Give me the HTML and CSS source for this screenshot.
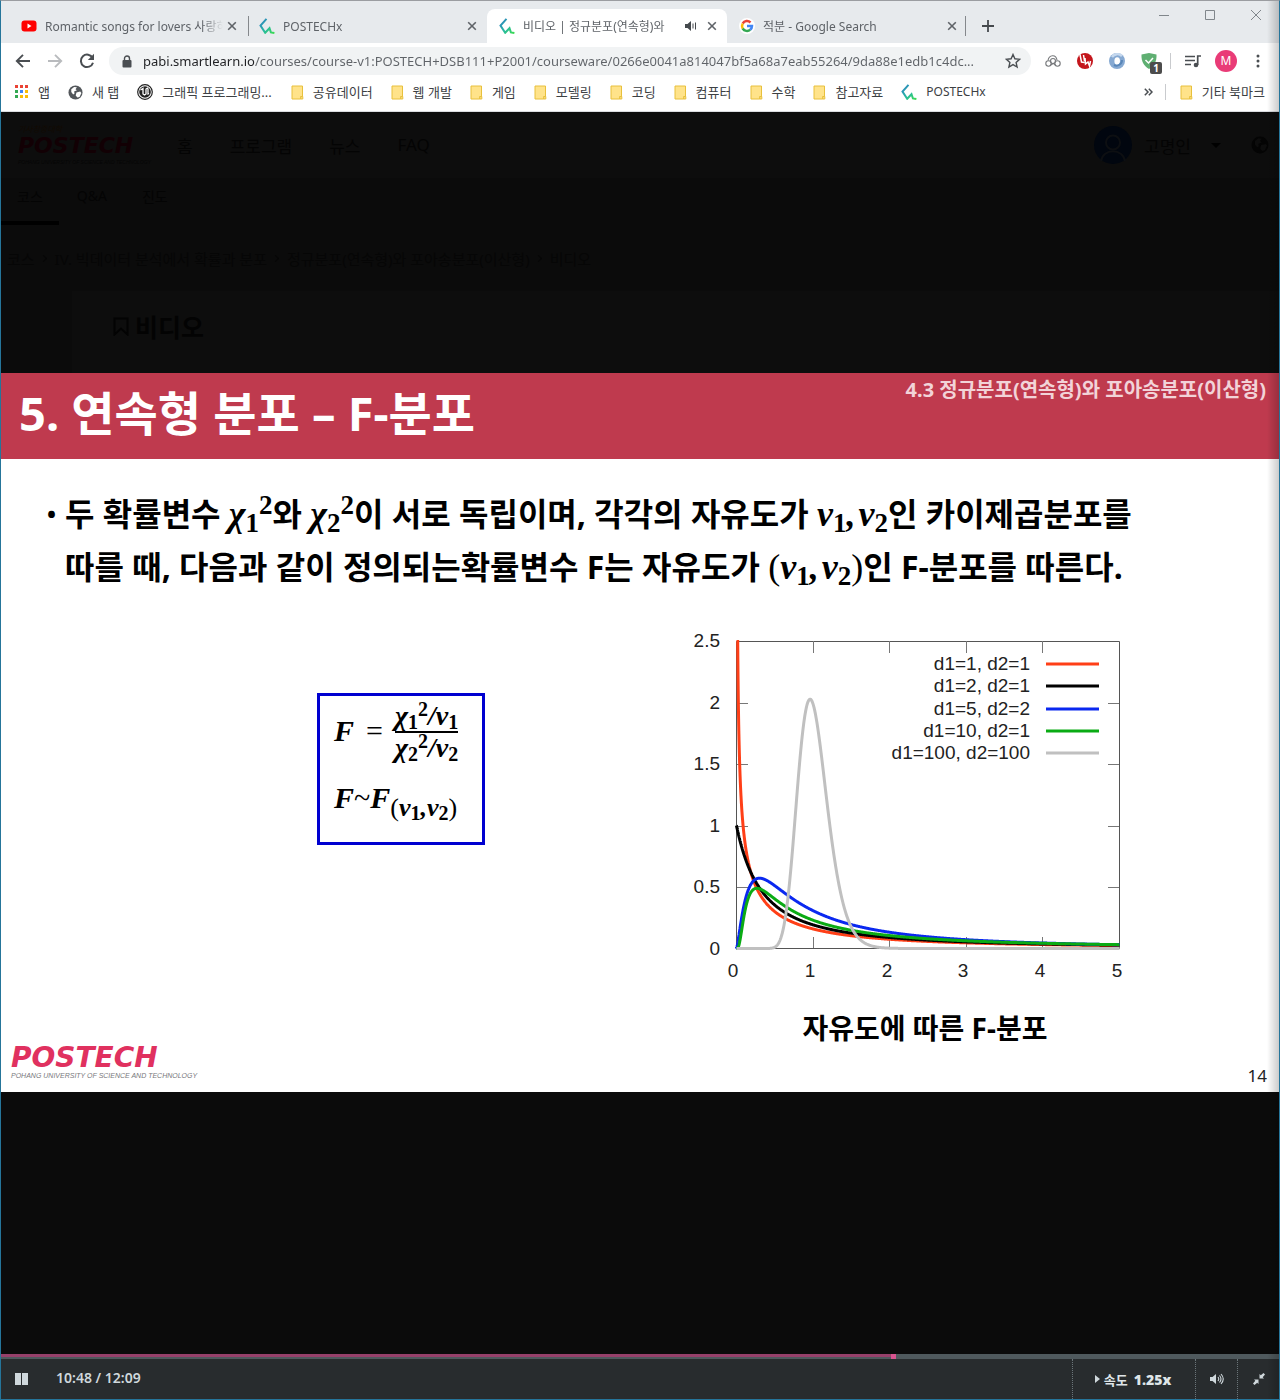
FILE: index.html
```html
<!DOCTYPE html>
<html lang="ko">
<head>
<meta charset="utf-8">
<meta name="viewport" content="width=device-width, initial-scale=1">
<title>비디오 | 정규분포(연속형)와 포아송분포(이산형)</title>
<link rel="stylesheet" href="styles.css">
</head>
<body>
<svg class="defs" width="0" height="0" aria-hidden="true">
  <defs>
    <linearGradient id="mark" x1="0" y1="0" x2="1" y2="1"><stop offset="0" stop-color="#2d7fc4"/><stop offset=".55" stop-color="#27b9a0"/><stop offset="1" stop-color="#3bdc4e"/></linearGradient>
    <symbol id="i-close" viewBox="0 0 10 10"><path d="M1.2 1.2l7.6 7.6M8.8 1.2L1.2 8.8" stroke="#5f6368" stroke-width="1.6" fill="none"/></symbol>
    <symbol id="i-smart" viewBox="0 0 16 16"><path d="M7.500 .8L1.500 7.500l4.700 7.300 4.300-4.600 1.400 4.200 3.500.6" stroke="url(#mark)" stroke-width="2" fill="none"/></symbol>
    <symbol id="i-folder" viewBox="0 0 13 15"><path d="M1 1h10.500v10.500H9.800V14H1z" fill="#ffe38a" stroke="#e8c03c"/><path d="M9.800 14V11.500h2V14z" fill="#ffe38a" stroke="#e8c03c"/></symbol>
    <symbol id="i-globe" viewBox="0 0 16 16"><circle cx="8" cy="8" r="7.500" fill="currentColor"/><path d="M3.500 4.500l3-2.500 3 .5-1.500 2 1.500 1-3 1.500.5 2-1.500 1-2-2.500zM9 8l4-1 1.300 1.500-2 4.200-2.300.6-1.800-2z" class="land"/></symbol>
  </defs>
</svg>

<div class="window">
  <header class="browser">
    <div class="tabstrip">
      <div class="tab">
        <svg class="fav" viewBox="0 0 16 16"><rect x=".5" y="2.500" width="15" height="11" rx="3" fill="#f00"/><path d="M6.500 5.500v5l4-2.500z" fill="#fff"/></svg>
        <span class="tab-title">Romantic songs for lovers 사랑하</span>
        <button class="icon-btn" aria-label="탭 닫기"><svg width="10" height="10"><use href="#i-close"/></svg></button>
      </div>
      <div class="tab tab-line">
        <svg class="fav"><use href="#i-smart"/></svg>
        <span class="tab-title">POSTECHx</span>
        <button class="icon-btn" aria-label="탭 닫기"><svg width="10" height="10"><use href="#i-close"/></svg></button>
      </div>
      <div class="tab tab-active">
        <svg class="fav"><use href="#i-smart"/></svg>
        <span class="tab-title">비디오 | 정규분포(연속형)와</span>
        <svg class="sound" width="12" height="12" viewBox="0 0 12 12"><path d="M0 4h2.500L6 1v10L2.500 8H0z" fill="#45494d"/><path d="M8 3.500v5M10.500 2.500v7" stroke="#45494d"/></svg>
        <button class="icon-btn" aria-label="탭 닫기"><svg width="10" height="10"><use href="#i-close"/></svg></button>
      </div>
      <div class="tab">
        <svg class="fav" viewBox="0 0 16 16" fill="none" stroke-width="2.500"><circle cx="8" cy="8" r="8" fill="#fff"/><path d="M11.500 4.500A5 5 0 0 0 3.700 5.500" stroke="#ea4335"/><path d="M3.700 5.500a5 5 0 0 0 0 5" stroke="#fbbc05"/><path d="M3.700 10.500a5 5 0 0 0 7.500 1.300" stroke="#34a853"/><path d="M11.200 11.800A5 5 0 0 0 13 8H8" stroke="#4285f4"/></svg>
        <span class="tab-title">적분 - Google Search</span>
        <button class="icon-btn" aria-label="탭 닫기"><svg width="10" height="10"><use href="#i-close"/></svg></button>
      </div>
      <button class="icon-btn new-tab" aria-label="새 탭"><svg width="12" height="12" viewBox="0 0 12 12"><path d="M6 0v12M0 6h12" stroke="#45494d" stroke-width="1.800"/></svg></button>
      <div class="window-buttons">
        <button class="icon-btn" aria-label="최소화"><svg width="12" height="12" viewBox="0 0 12 12"><path d="M1 6.500h10" stroke="#80868b"/></svg></button>
        <button class="icon-btn" aria-label="최대화"><svg width="12" height="12" viewBox="0 0 12 12"><path d="M1.500 1.500h9v9h-9z" stroke="#80868b" fill="none"/></svg></button>
        <button class="icon-btn" aria-label="닫기"><svg width="12" height="12" viewBox="0 0 12 12"><path d="M1 1l10 10M11 1L1 11" stroke="#80868b"/></svg></button>
      </div>
    </div>

    <div class="toolbar">
      <button class="icon-btn" aria-label="뒤로"><svg width="16" height="16" viewBox="0 0 16 16" fill="none" stroke="#4a4e52" stroke-width="1.900"><path d="M15 8H2M8 1.800L1.800 8 8 14.200"/></svg></button>
      <button class="icon-btn" aria-label="앞으로"><svg width="16" height="16" viewBox="0 0 16 16" fill="none" stroke="#b9bbbe" stroke-width="1.900"><path d="M1 8h13M8 1.800L14.200 8 8 14.200"/></svg></button>
      <button class="icon-btn" aria-label="새로고침"><svg width="16" height="16" viewBox="0 0 16 16"><path d="M13.600 5A6.200 6.200 0 1 0 14 9.700" fill="none" stroke="#4a4e52" stroke-width="2"/><path d="M15 .8v6.200H8.800z" fill="#4a4e52"/></svg></button>
      <div class="omnibox">
        <svg width="10" height="13" viewBox="0 0 10 13"><rect x=".5" y="5" width="9" height="7.500" rx="1" fill="#4a4e52"/><path d="M2.500 5V3.500a2.500 2.500 0 0 1 5 0V5" fill="none" stroke="#4a4e52" stroke-width="1.400"/></svg>
        <input class="url" type="text" aria-label="주소" value="pabi.smartlearn.io/courses/course-v1:POSTECH+DSB111+P2001/courseware/0266e0041a814047bf5a68a7eab55264/9da88e1edb1c4dc...">
        <button class="icon-btn" aria-label="북마크"><svg width="16" height="16" viewBox="0 0 16 16"><path d="M8 1.500l1.900 4.300 4.700.5-3.500 3.100 1 4.600L8 11.600 3.900 14l1-4.600L1.400 6.300l4.700-.5z" fill="none" stroke="#4a4e52" stroke-width="1.400"/></svg></button>
      </div>
      <div class="extensions">
        <svg width="16" height="16" viewBox="0 0 16 16" fill="none" stroke="#77797c" stroke-width="1.100"><circle cx="3.500" cy="10.500" r="2.700"/><circle cx="12.500" cy="10.500" r="2.700"/><circle cx="8" cy="8" r="2.500"/><path d="M3 7.500C4 1.500 11 1 12 7M5.500 12l3-1.500 2 1.500"/></svg>
        <svg width="16" height="16" viewBox="0 0 16 16"><circle cx="8" cy="8" r="8" fill="#c4161c"/><path d="M3 1.500l1.500 7.500 3 .5M6.500 2l1 6M8 5l.5 6 2.500-2 1.500 4L13.500 8" stroke="#fff" stroke-width="1.500" fill="none"/></svg>
        <svg width="16" height="16" viewBox="0 0 16 16"><circle cx="8" cy="8" r="8" fill="#86a9d2"/><path d="M3 4a6.500 6.500 0 0 1 10-1" stroke="#c5d8ee" stroke-width="2.500" fill="none"/><ellipse cx="8.200" cy="8" rx="2.800" ry="3.800" fill="#fff"/><path d="M5 12a5.500 5.500 0 0 0 8-5" stroke="#5986b8" stroke-width="2" fill="none"/></svg>
        <span class="guard"><svg width="16" height="16" viewBox="0 0 16 16"><path d="M8 0l7.500 1.500c.3 7-2 11-7.500 14.500C2.500 12.500.2 8.500.5 1.500z" fill="#5faf72"/><path d="M4.500 7l3 3L12 5" fill="none" stroke="#fff" stroke-width="1.500"/></svg><b class="badge">1</b></span>
        <span class="divider"></span>
        <svg width="16" height="14" viewBox="0 0 16 14"><path d="M0 2.500h10M0 6.500h10M0 10.500h6" stroke="#4a4e52" stroke-width="1.700"/><path d="M12.700 11V2H16" stroke="#4a4e52" stroke-width="1.700" fill="none"/><circle cx="11" cy="11" r="2.300" fill="#4a4e52"/></svg>
        <button class="avatar" aria-label="프로필">M</button>
        <button class="icon-btn" aria-label="메뉴"><svg width="14" height="14" viewBox="0 0 14 14" fill="#4a4e52"><circle cx="7" cy="2" r="1.500"/><circle cx="7" cy="7" r="1.500"/><circle cx="7" cy="12" r="1.500"/></svg></button>
      </div>
    </div>

    <nav class="bookmarks" aria-label="북마크">
      <a href="#"><svg width="14" height="14" viewBox="0 0 14 14"><path d="M0 0h3v3H0zM5 0h3v3H5zM10 0h3v3h-3z" fill="#ea4335"/><path d="M0 5h3v3H0zM0 10h3v3H0z" fill="#34a853"/><path d="M5 5h3v3H5z" fill="#4285f4"/><path d="M10 5h3v3h-3zM5 10h3v3H5zM10 10h3v3h-3z" fill="#fbbc05"/></svg>앱</a>
      <a href="#"><svg class="bm-globe" width="15" height="15"><use href="#i-globe"/></svg>새 탭</a>
      <a href="#"><svg width="16" height="16" viewBox="0 0 16 16"><circle cx="8" cy="8" r="7.300" fill="#fff" stroke="#222" stroke-width="1.200"/><circle cx="8" cy="8" r="5.800" fill="#222"/><path d="M3.500 6L6 4.500v5.500l1.500 1 1.500-1V5l2-1.200M11 4.500V10l1-.5" stroke="#fff" stroke-width="1.300" fill="none"/></svg>그래픽 프로그래밍...</a>
      <a href="#" class="first-folder"><svg width="13" height="15"><use href="#i-folder"/></svg>공유데이터</a>
      <a href="#"><svg width="13" height="15"><use href="#i-folder"/></svg>웹 개발</a>
      <a href="#"><svg width="13" height="15"><use href="#i-folder"/></svg>게임</a>
      <a href="#"><svg width="13" height="15"><use href="#i-folder"/></svg>모델링</a>
      <a href="#"><svg width="13" height="15"><use href="#i-folder"/></svg>코딩</a>
      <a href="#"><svg width="13" height="15"><use href="#i-folder"/></svg>컴퓨터</a>
      <a href="#"><svg width="13" height="15"><use href="#i-folder"/></svg>수학</a>
      <a href="#"><svg width="13" height="15"><use href="#i-folder"/></svg>참고자료</a>
      <a href="#" class="latin"><svg width="16" height="16"><use href="#i-smart"/></svg>POSTECHx</a>
      <button class="icon-btn more" aria-label="북마크 더보기"><svg width="9" height="8" viewBox="0 0 9 8"><path d="M.8.8L4 4 .8 7.200M4.800.8L8 4 4.800 7.200" fill="none" stroke="#4a4e52" stroke-width="1.500"/></svg></button>
      <span class="divider"></span>
      <a href="#"><svg width="13" height="15"><use href="#i-folder"/></svg>기타 북마크</a>
    </nav>
  </header>

  <section class="course">
    <div class="site-header">
      <div class="logo logo-dim"><small class="logo-ko">기사창중대학</small><strong>POSTECH</strong><small>POHANG UNIVERSITY OF SCIENCE AND TECHNOLOGY</small></div>
      <nav class="site-nav"><a href="#">홈</a><a href="#">프로그램</a><a href="#">뉴스</a><a href="#">FAQ</a></nav>
      <div class="account">
        <svg width="38" height="38" viewBox="0 0 38 38"><circle cx="19" cy="19" r="19" fill="#01060f"/><circle cx="19" cy="16.500" r="7" fill="none" stroke="#0d0f12" stroke-width="2"/><path d="M7 35c2-13 22-13 24 0" fill="none" stroke="#0d0f12" stroke-width="2"/></svg>
        <span>고명인</span>
        <svg class="caret" width="10" height="5" viewBox="0 0 10 5"><path d="M0 0h10L5 5z" fill="#000"/></svg>
        <svg class="world" width="18" height="18"><use href="#i-globe"/></svg>
      </div>
    </div>
    <nav class="course-tabs"><a href="#" class="current">코스</a><a href="#">Q&amp;A</a><a href="#">진도</a></nav>
    <nav class="crumbs"><a href="#">코스</a><i></i><a href="#">IV. 빅데이터 분석에서 확률과 분포</a><i></i><a href="#">정규분포(연속형)와 포아송분포(이산형)</a><i></i><span>비디오</span></nav>
    <div class="unit"><svg width="16" height="19" viewBox="0 0 16 19"><path d="M1.500 1.500h13v16L8 11.500l-6.500 6z" fill="none" stroke="#030303" stroke-width="2"/></svg><h2>비디오</h2></div>
  </section>

  <main class="slide">
    <div class="slide-head">
      <h1>5. 연속형 분포 – F-분포</h1>
      <p>4.3 정규분포(연속형)와 포아송분포(이산형)</p>
    </div>
    <ul class="points">
      <li>두 확률변수 <span class="math">χ<sub>1</sub><sup>2</sup></span>와 <span class="math">χ<sub>2</sub><sup>2</sup></span>이 서로 독립이며, 각각의 자유도가 <span class="math">v<sub>1</sub>,&#8202;v<sub>2</sub></span>인 카이제곱분포를<br>따를 때, 다음과 같이 정의되는확률변수 F는 자유도가 <span class="math"><span class="paren">(</span>v<sub>1</sub>,&#8202;v<sub>2</sub><span class="paren">)</span></span>인 F-분포를 따른다.</li>
    </ul>
    <div class="exhibit">
      <div class="formula math">
        <div class="equation">F <span class="rel">=</span>
          <span class="fraction"><span>χ<sub>1</sub><sup>2</sup>/v<sub>1</sub></span><span>χ<sub>2</sub><sup>2</sup>/v<sub>2</sub></span></span>
        </div>
        <div class="law">F<span class="rel">~</span>F<sub><span class="paren">(</span>v<sub>1</sub>,v<sub>2</sub><span class="paren">)</span></sub></div>
      </div>
      <figure>
        <svg class="chart" viewBox="0 0 440 360" role="img" aria-label="자유도에 따른 F-분포">
          <path class="axis" d="M46.500 11.500h383v307h-383z"/>
          <path class="tick" d="M123.500 11v12M199.500 11v12M276.500 11v12M352.500 11v12M123.500 318v-11M199.500 318v-11M276.500 318v-11M352.500 318v-11M47 73.500h11M47 134.500h11M47 196.500h11M47 257.500h11M429 73.500h-11M429 134.500h-11M429 196.500h-11M429 257.500h-11"/>
          <g id="curves"></g>
          <g class="end"><text x="30" y="17">2.5</text><text x="30" y="79">2</text><text x="30" y="140">1.5</text><text x="30" y="202">1</text><text x="30" y="263">0.5</text><text x="30" y="325">0</text></g>
          <g class="mid"><text x="43" y="347">0</text><text x="120" y="347">1</text><text x="197" y="347">2</text><text x="273" y="347">3</text><text x="350" y="347">4</text><text x="427" y="347">5</text></g>
          <g class="end key"><text x="340" y="40">d1=1, d2=1</text><text x="340" y="62">d1=2, d2=1</text><text x="340" y="85">d1=5, d2=2</text><text x="340" y="107">d1=10, d2=1</text><text x="340" y="129">d1=100, d2=100</text></g>
          <g stroke-width="3"><path d="M356 34h53" stroke="#ff3f17"/><path d="M356 56h53" stroke="#000"/><path d="M356 79h53" stroke="#0a28f0"/><path d="M356 101h53" stroke="#0aab14"/><path d="M356 123h53" stroke="#c0c0c0"/></g>
        </svg>
        <figcaption>자유도에 따른 F-분포</figcaption>
      </figure>
    </div>
    <footer class="slide-foot">
      <div class="logo"><strong>POSTECH</strong><small>POHANG UNIVERSITY OF SCIENCE AND TECHNOLOGY</small></div>
      <span>14</span>
    </footer>
  </main>

  <div class="letterbox"></div>

  <div class="player">
    <input class="seek" type="range" min="0" max="1000" value="699" aria-label="재생 위치" style="--played: 69.9%">
    <div class="controls">
      <button class="play" aria-label="일시정지"><svg width="13" height="12" viewBox="0 0 13 12"><path d="M0 0h6v12H0zM7 0h6v12H7z" fill="#cfd8dc"/></svg></button>
      <span class="time">10:48 / 12:09</span>
      <button class="speed"><svg width="5" height="8" viewBox="0 0 5 8"><path d="M0 0l5 4-5 4z" fill="#cfd8dc"/></svg>속도 <b>1.25x</b></button>
      <button class="tool" aria-label="음량"><svg width="14" height="12" viewBox="0 0 14 12"><path d="M0 4h2.500L6 1v10L2.500 8H0z" fill="#cfd8dc"/><path d="M8 4q1.500 2 0 4M9.500 2.500q3 3.500 0 7M11 1q4.500 5 0 10" fill="none" stroke="#cfd8dc" stroke-width="1.100"/></svg></button>
      <button class="tool" aria-label="전체 화면 종료"><svg width="12" height="12" viewBox="0 0 12 12"><path d="M6.500 1l1.300 1.300L10.500 0 12 1.500 9.700 4.200 11 5.500H6.500zM5.500 11L4.200 9.700 1.500 12 0 10.500l2.300-2.700L1 6.500h4.500z" fill="#cfd8dc"/></svg></button>
    </div>
  </div>
</div>
<script src="chart.js"></script>
</body>
</html>
```
FILE: styles.css
```css
* { box-sizing: border-box; }

body {
  margin: 0;
  font-family: "Noto Sans", "Noto Sans CJK KR", sans-serif;
  font-size: 13px;
  color: #3c4043;
}

button {
  font: inherit;
  color: inherit;
  border: 0;
  padding: 0;
  background: none;
}

a { color: inherit; text-decoration: none; }
svg { flex: none; display: block; }
.defs { position: absolute; }

.window {
  position: relative;
  display: flex;
  flex-direction: column;
  min-height: 100vh;
  border: 1px solid #25759a;
  border-top-color: #9b9da1;
  background: #0b0b0b;
}

/* soft shade along the right edge of the window */
.window::after {
  content: "";
  position: absolute;
  inset: 0 0 0 auto;
  width: 12px;
  background: linear-gradient(90deg, transparent, rgba(0, 0, 0, .2));
  pointer-events: none;
}

.icon-btn { display: grid; place-items: center; flex: none; }
.divider { width: 1px; height: 16px; background: #c9cbce; }

/* browser chrome */
.browser { background: #fff; border-bottom: 1px solid #dadce0; }

.tabstrip {
  display: flex;
  height: 42px;
  padding-left: 6px;
  background: #e7eaed;
}

.tab {
  position: relative;
  display: flex;
  align-items: center;
  width: 240px;
  height: 34px;
  margin-top: 8px;
  padding: 0 10px 0 14px;
  font-size: 12px;
  color: #5f6368;
}

.tab-line::before,
.tab:nth-child(4)::after {
  content: "";
  position: absolute;
  top: 7px;
  left: 1px;
  width: 1px;
  height: 20px;
  background: #85888c;
}

.tab:nth-child(4)::after { left: auto; right: 1px; }
.tab-active { background: #fff; border-radius: 8px 8px 0 0; }
.fav { width: 16px; height: 16px; margin-right: 8px; }
.tab:not(:first-child) .fav { margin-left: -2px; margin-right: 8px; }

.tab-title {
  flex: 1;
  min-width: 0;
  margin-right: 4px;
  overflow: hidden;
  white-space: nowrap;
  -webkit-mask-image: linear-gradient(90deg, #000 calc(100% - 20px), transparent);
  mask-image: linear-gradient(90deg, #000 calc(100% - 20px), transparent);
}

.sound { margin-right: 10px; }
.new-tab { width: 42px; margin-top: 8px; }

.window-buttons {
  display: flex;
  gap: 34px;
  height: 28px;
  margin-left: auto;
  padding-right: 17px;
}

.toolbar {
  display: flex;
  align-items: center;
  gap: 16px;
  height: 36px;
  padding: 0 14px;
}

.omnibox {
  display: flex;
  align-items: center;
  flex: 1;
  min-width: 0;
  gap: 10px;
  height: 28px;
  margin-left: -2px;
  padding: 0 10px 0 13px;
  border-radius: 14px;
  background: #f1f3f4;
}

/* host name dark, path grey */
.url {
  flex: 1;
  min-width: 0;
  height: 24px;
  padding: 0 0 0 1px;
  border: 0;
  outline: 0;
  font: inherit;
  font-size: 13px;
  color: transparent;
  background: linear-gradient(90deg, #202124 113px, #5f6368 113px);
  -webkit-background-clip: text;
  background-clip: text;
}

.extensions { display: flex; align-items: center; gap: 16px; margin-left: -2px; }
.extensions .divider { margin: 0 -2px 0 -3px; }
.guard { position: relative; }

.badge {
  position: absolute;
  left: 9px;
  top: 9px;
  width: 12px;
  height: 12px;
  border-radius: 2px;
  background: #4c4c4c;
  color: #fff;
  font-size: 10px;
  line-height: 12px;
  text-align: center;
}

.avatar {
  width: 22px;
  height: 22px;
  margin: 0 -2px;
  border-radius: 50%;
  background: #e93b77;
  color: #fff;
  font-size: 12px;
  line-height: 22px;
}

.bookmarks {
  display: flex;
  align-items: center;
  gap: 18px;
  height: 32px;
  padding: 0 14px 6px;
  white-space: nowrap;
}

.bookmarks a { display: flex; align-items: center; gap: 9px; line-height: 20px; }
.bookmarks .latin { font-size: 12px; }
.bookmarks .first-folder { margin-left: 1px; }
.bm-globe { color: #53575b; --land: #fff; }
.land { fill: var(--land, #0d0d0d); }
.more { margin-left: auto; }
.bookmarks .divider { margin: 0 -4px 0 -6px; }

/* course page, dimmed behind the player */
.course {
  display: flow-root;
  height: 261px;
  color: #040404;
  font-size: 14px;
}

.site-header {
  display: flex;
  align-items: center;
  height: 66px;
  padding: 0 10px 0 17px;
  background: #0d0d0d;
  font-size: 17px;
}

.logo { display: grid; color: #e0315f; font-family: "DejaVu Sans", sans-serif; font-style: italic; }
.logo strong { font-size: 28px; line-height: 28px; }
.logo small { font-family: "Liberation Sans", sans-serif; font-size: 7px; line-height: 8px; color: #77777c; }
.logo-dim { width: 127px; color: #120004; }
.logo-dim strong { font-size: 22px; line-height: 26px; }
.logo-dim small { font-size: 5px; line-height: 6px; color: #050505; white-space: nowrap; }
.logo-dim .logo-ko { font-size: 8px; line-height: 8px; color: #120a02; font-family: "Noto Sans CJK KR", sans-serif; }

.site-nav { display: flex; gap: 37px; margin-left: 32px; }
.account { display: flex; align-items: center; margin-left: auto; }
.account span { margin: 0 20px 0 12px; }
.world { margin-left: 30px; color: #040404; }

.course-tabs { display: flex; height: 47px; }
.course-tabs a { padding: 8px 16px 0; }
.course-tabs .current { border-bottom: 4px solid #000; }
.course-tabs a + a { padding: 8px 17px 0 18px; }

.crumbs { display: flex; align-items: center; height: 66px; padding-left: 6px; color: #060606; font-size: 15px; }
.crumbs i {
  width: 5px;
  height: 5px;
  margin: 0 9px 0 6px;
  border: solid #060606;
  border-width: 1px 1px 0 0;
  transform: rotate(45deg);
}

.unit {
  display: flex;
  align-items: center;
  gap: 6px;
  height: 82px;
  margin-left: 71px;
  padding: 0 0 11px 41px;
  background: #0d0d0d;
}

.unit h2 { margin: 0; font-size: 25px; line-height: 36px; color: #030303; }

/* lecture slide */
.slide {
  display: flex;
  flex-direction: column;
  min-height: 719px;
  background: #fff;
  color: #000;
}

.slide-head {
  display: flex;
  justify-content: space-between;
  height: 86px;
  padding: 0 13px 0 18px;
  background: #bf3a4e;
  color: #fff;
}

.slide-head h1 { margin: 0; font-size: 47px; line-height: 80px; }
.slide-head p { margin: 0; font-size: 20px; font-weight: 700; line-height: 34px; color: #f2d3d8; }

.points {
  margin: 0;
  padding: 28px 0 0 64px;
  list-style: none;
  font-size: 32px;
  font-weight: 700;
  line-height: 53px;
  white-space: nowrap;
}

.points li::before { content: "•"; float: left; width: 18px; margin-left: -18px; font-size: 24px; }

.math { font-family: "Liberation Serif", serif; font-style: italic; font-weight: 700; }
.points .math { font-size: 36px; line-height: 0; }
.math sub, .math sup { font-size: 27px; font-style: normal; line-height: 0; }
.math sub { vertical-align: -6px; }
.math sup { vertical-align: 12px; }
.math .paren { font-style: normal; font-weight: 400; }

.exhibit { display: grid; grid-template-columns: 484fr 794fr; padding-top: 37px; }

.formula {
  justify-self: end;
  width: 168px;
  height: 152px;
  margin-top: 63px;
  padding: 4px 0 0 14px;
  border: 3px solid #0000d0;
  font-size: 30px;
}

.formula .rel { font-style: normal; font-weight: 400; }
.equation { display: flex; align-items: center; gap: 12px; height: 62px; }
.fraction { font-size: 28px; line-height: 30px; }
.fraction span { display: block; height: 30px; }
.fraction span + span { border-top: 2px solid #000; }
.fraction sub, .fraction sup { font-size: 20px; }
.fraction sub { vertical-align: -4px; }
.fraction sup { vertical-align: 9px; }
.law { line-height: 40px; margin-top: 16px; }
.law sub { font-size: 26px; font-style: italic; vertical-align: -8px; }
.law sub sub { font-size: 20px; font-style: normal; vertical-align: -4px; }

figure { width: 440px; margin: 0 0 0 205px; }
.chart { width: 100%; font: 19px "Liberation Sans", sans-serif; fill: #222; }
.axis, .tick { fill: none; stroke: #555; }
.tick { stroke: #777; }
.end { text-anchor: end; }
.mid { text-anchor: middle; }
#curves { fill: none; stroke-width: 3; }
figcaption { margin-top: 22px; padding-left: 30px; font-size: 28px; font-weight: 700; line-height: 32px; text-align: center; }

.slide-foot {
  display: flex;
  align-items: flex-end;
  justify-content: space-between;
  margin-top: auto;
  padding: 0 12px 4px 10px;
  font-size: 17px;
  line-height: 24px;
  color: #222;
}

.slide-foot .logo { padding-bottom: 8px; }

.letterbox { flex: 1; }

/* player controls */
.player { background: #282c2e; color: #dfe5e8; }

.seek {
  display: block;
  width: 100%;
  height: 5px;
  margin: 0;
  appearance: none;
  background:
    linear-gradient(#96406a, #96406a) 0 0 / var(--played) 3px no-repeat,
    #4f595d;
}

.seek::-webkit-slider-thumb { appearance: none; width: 5px; height: 5px; background: #d8548f; }

.controls { display: flex; align-items: center; height: 40px; font-size: 13px; font-weight: 600; }
.play { display: grid; place-items: center; width: 40px; height: 40px; }
.time { margin-left: 15px; font-size: 14px; line-height: 36px; padding-bottom: 2px; color: #cfd8dc; }
.speed, .tool {
  display: flex;
  align-items: center;
  justify-content: center;
  gap: 4px;
  width: 42px;
  height: 40px;
  border-left: 1px dotted #6b7579;
}
.speed { width: 123px; margin-left: auto; padding-right: 2px; }
.speed b { margin-left: 2px; font-size: 14px; }
```
FILE: chart.js
```javascript
// Draws the F-distribution densities on the chart's 0–5 by 0–2.5 grid.
const PLOT = { left: 46.5, bottom: 318.5, unitX: 76.6, unitY: 122.8, maxX: 5, maxY: 2.5 };

function logGamma(z) {
  let shift = 0;
  while (z < 8) { shift -= Math.log(z); z += 1; }
  return shift + (z - 0.5) * Math.log(z) - z + 0.5 * Math.log(2 * Math.PI)
    + 1 / (12 * z) - 1 / (360 * z ** 3);
}

function density(x, a, b) {
  const logBeta = logGamma(a / 2) + logGamma(b / 2) - logGamma((a + b) / 2);
  return Math.exp(0.5 * (a * Math.log(a * x) + b * Math.log(b) - (a + b) * Math.log(a * x + b))
    - Math.log(x) - logBeta);
}

const series = [
  [1, 1, "#ff3f17"],
  [2, 1, "#000"],
  [5, 2, "#0a28f0"],
  [10, 1, "#0aab14"],
  [100, 100, "#c0c0c0"],
];

for (const [a, b, color] of series) {
  const points = [];
  for (let i = 1; i <= 1000; i++) {
    const x = PLOT.maxX * (i / 1000) ** 2;
    const y = Math.min(density(x, a, b), PLOT.maxY);
    points.push(`${(PLOT.left + x * PLOT.unitX).toFixed(2)},${(PLOT.bottom - y * PLOT.unitY).toFixed(2)}`);
  }
  const line = document.createElementNS("http://www.w3.org/2000/svg", "polyline");
  line.setAttribute("points", points.join(" "));
  line.setAttribute("stroke", color);
  document.getElementById("curves").append(line);
}
```
